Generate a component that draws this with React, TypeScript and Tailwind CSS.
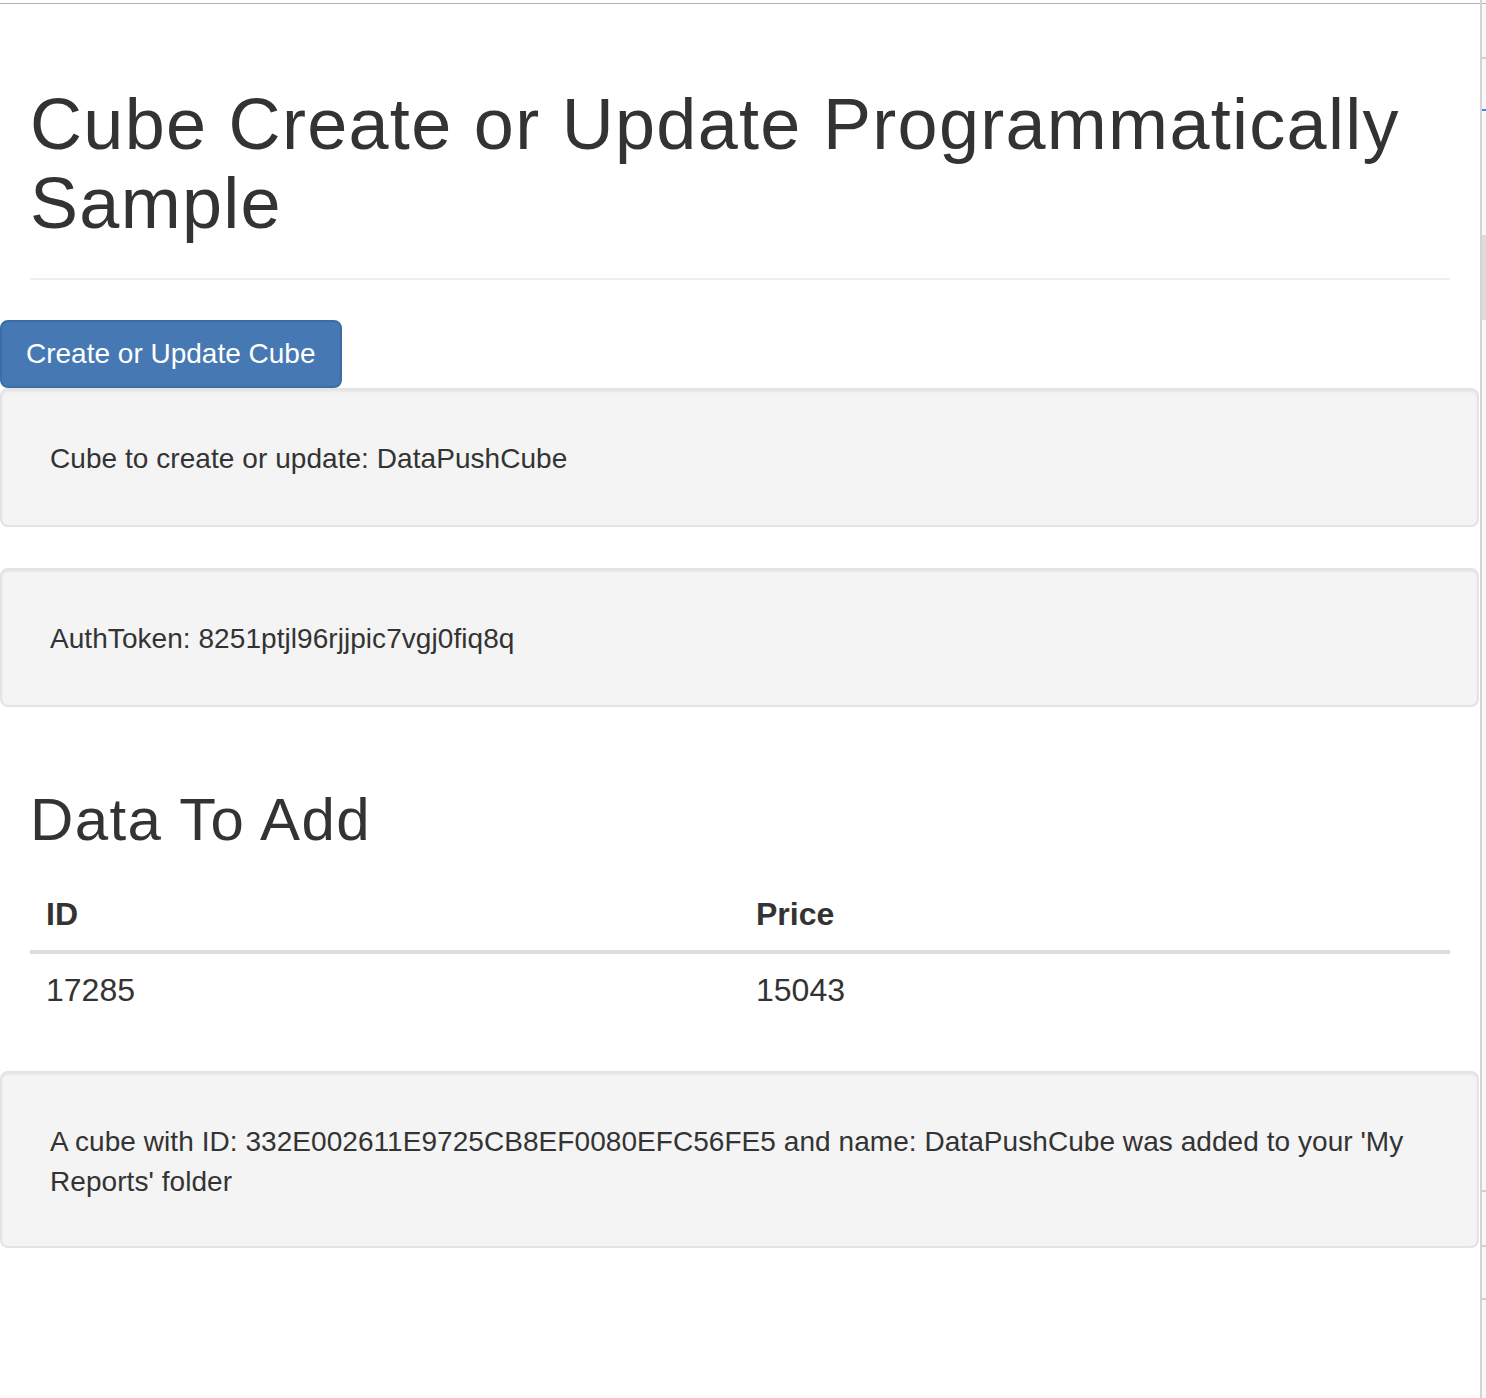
export default function App() {
  const rows = [{ id: '17285', price: '15043' }]

  const well =
    'mr-[1px] rounded-[8px] border-2 border-[#e3e3e3] bg-[#f4f4f4] pl-[48px] pr-[48px] text-[28px] leading-[40px] tracking-[0.002em] shadow-[inset_0_2px_2px_rgba(0,0,0,0.05)]'

  return (
    <div className="flex min-h-[1398px] w-full bg-white text-[#333] font-['Liberation_Sans','Helvetica_Neue',Arial,sans-serif]">
      {/* page */}
      <div className="w-[1480px] shrink-0">
        <div className="mt-[3px] border-t border-[#b4b4b4]" />

        <div className="px-[30px]">
          <div className="border-b-2 border-[#eee] pb-[35px]">
            <h1 className="mt-[81px] text-[72px] leading-[79px] font-normal tracking-[0.018em]">
              Cube Create or Update Programmatically Sample
            </h1>
          </div>
        </div>

        <button className="mt-[40px] flex h-[68px] items-center rounded-[8px] border-2 border-[#3d6da4] bg-[#4679b3] pl-[24px] pr-[24px] text-[28px] leading-[40px] text-white">
          Create or Update Cube
        </button>

        <div className={`${well} pt-[49px] pb-[46px]`}>Cube to create or update: DataPushCube</div>

        <div className={`${well} mt-[41px] pt-[49px] pb-[46px]`}>AuthToken: 8251ptjl96rjjpic7vgj0fiq8q</div>

        <div className="px-[30px]">
          <h2 className="mt-[80px] text-[60px] leading-[66px] font-normal tracking-[0.023em]">Data To Add</h2>

          <table className="mt-[25px] w-full table-fixed border-collapse text-[32px] leading-[40px]">
            <thead>
              <tr className="border-b-4 border-[#ddd]">
                <th className="px-[16px] py-[16px] text-left font-bold">ID</th>
                <th className="px-[16px] py-[16px] text-left font-bold">Price</th>
              </tr>
            </thead>
            <tbody>
              {rows.map((r) => (
                <tr key={r.id}>
                  <td className="px-[16px] py-[16px]">{r.id}</td>
                  <td className="px-[16px] py-[16px]">{r.price}</td>
                </tr>
              ))}
            </tbody>
          </table>
        </div>

        <div className={`${well} mt-[45px] pt-[49px] pb-[44px]`}>
          A cube with ID: 332E002611E9725CB8EF0080EFC56FE5 and name: DataPushCube was added to your 'My Reports' folder
        </div>
      </div>

      {/* side strip */}
      <div className="flex flex-1 flex-col border-l-2 border-[#d4d4d4] bg-[#f8f8f8]">
        <div className="mt-[3px] border-t border-[#b4b4b4]" />
        <div className="mt-[53px] h-[2px] bg-[#d0d0d0]" />
        <div className="mt-[50px] h-[2px] bg-[#3b82f6]" />
        <div className="mt-[124px] h-[85px] bg-[#dcdcdc]" />
        <div className="mt-[870px] h-[2px] bg-[#d0d0d0]" />
        <div className="mt-[53px] h-[2px] bg-[#d0d0d0]" />
        <div className="mt-[51px] h-[2px] bg-[#d0d0d0]" />
      </div>
    </div>
  )
}
